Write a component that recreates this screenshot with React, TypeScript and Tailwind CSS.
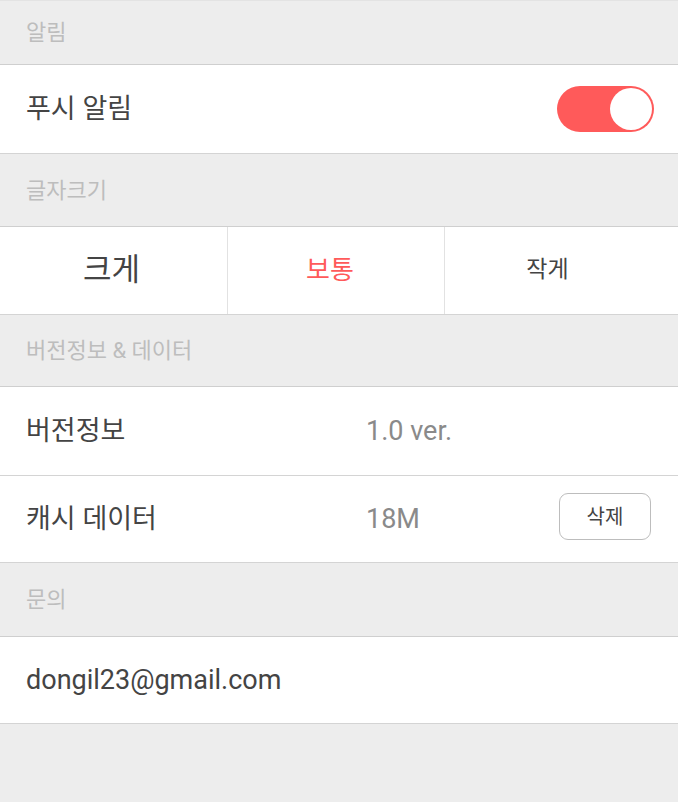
import React, { useState } from "react";

const FONT = "font-['Roboto','Noto_Sans_CJK_KR',sans-serif]";

function SectionHeader({ title, className = "" }: { title: string; className?: string }) {
  return (
    <div
      className={`flex items-center border-b border-[#cfcfcf] bg-[#ededed] px-[26px] text-[22px] text-[#bdbdbd] ${className}`}
    >
      {title}
    </div>
  );
}

function Row({ children, className = "" }: { children: React.ReactNode; className?: string }) {
  return (
    <div className={`flex items-center border-b border-[#d4d4d4] bg-white px-[26px] ${className}`}>
      {children}
    </div>
  );
}

export default function App() {
  const [push, setPush] = useState(true);
  const [size, setSize] = useState<"large" | "normal" | "small">("normal");

  const sizeBtn = (key: "large" | "normal" | "small", label: string, cls: string) => (
    <button
      onClick={() => setSize(key)}
      className={`flex items-center justify-center ${cls} ${
        size === key ? "text-[#ff5a5a]" : "text-[#444]"
      }`}
    >
      {label}
    </button>
  );

  return (
    <div className={`min-h-[802px] w-full bg-[#ededed] ${FONT}`}>
      <SectionHeader title="알림" className="h-[65px] border-t border-t-[#e3e3e3]" />
      <Row className="h-[89px] justify-between">
        <span className="text-[27px] text-[#444]">푸시 알림</span>
        <button
          onClick={() => setPush((p) => !p)}
          className={`mr-[-2px] flex h-[46px] w-[97px] items-center rounded-full p-[2px] ${
            push ? "justify-end bg-[#ff5a5a]" : "justify-start bg-[#d4d4d4]"
          }`}
        >
          <span className="h-[42px] w-[42px] rounded-full bg-white" />
        </button>
      </Row>

      <SectionHeader title="글자크기" className="h-[73px]" />
      <div className="flex h-[88px] border-b border-[#d4d4d4] bg-white">
        {sizeBtn("large", "크게", "w-[227px] pr-[4px] text-[31px]")}
        <div className="w-px bg-[#e2e2e2]" />
        {sizeBtn("normal", "보통", "w-[216px] pr-[12px] text-[26px]")}
        <div className="w-px bg-[#e2e2e2]" />
        {sizeBtn("small", "작게", "flex-1 pr-[28px] text-[23px]")}
      </div>

      <SectionHeader title="버전정보 & 데이터" className="h-[72px]" />
      <Row className="h-[89px]">
        <span className="w-[340px] text-[27px] text-[#444]">버전정보</span>
        <span className="text-[27px] text-[#8a8a8a]">1.0 ver.</span>
      </Row>
      <Row className="h-[87px]">
        <span className="w-[340px] text-[27px] text-[#444]">캐시 데이터</span>
        <span className="flex-1 text-[27px] text-[#8a8a8a]">18M</span>
        <button className="mb-[5px] mr-[1px] h-[47px] w-[92px] rounded-[9px] border border-[#bdbdbd] bg-white text-[20px] text-[#444]">
          삭제
        </button>
      </Row>

      <SectionHeader title="문의" className="h-[74px]" />
      <Row className="h-[87px]">
        <span className="text-[27px] text-[#444]">dongil23@gmail.com</span>
      </Row>
    </div>
  );
}
